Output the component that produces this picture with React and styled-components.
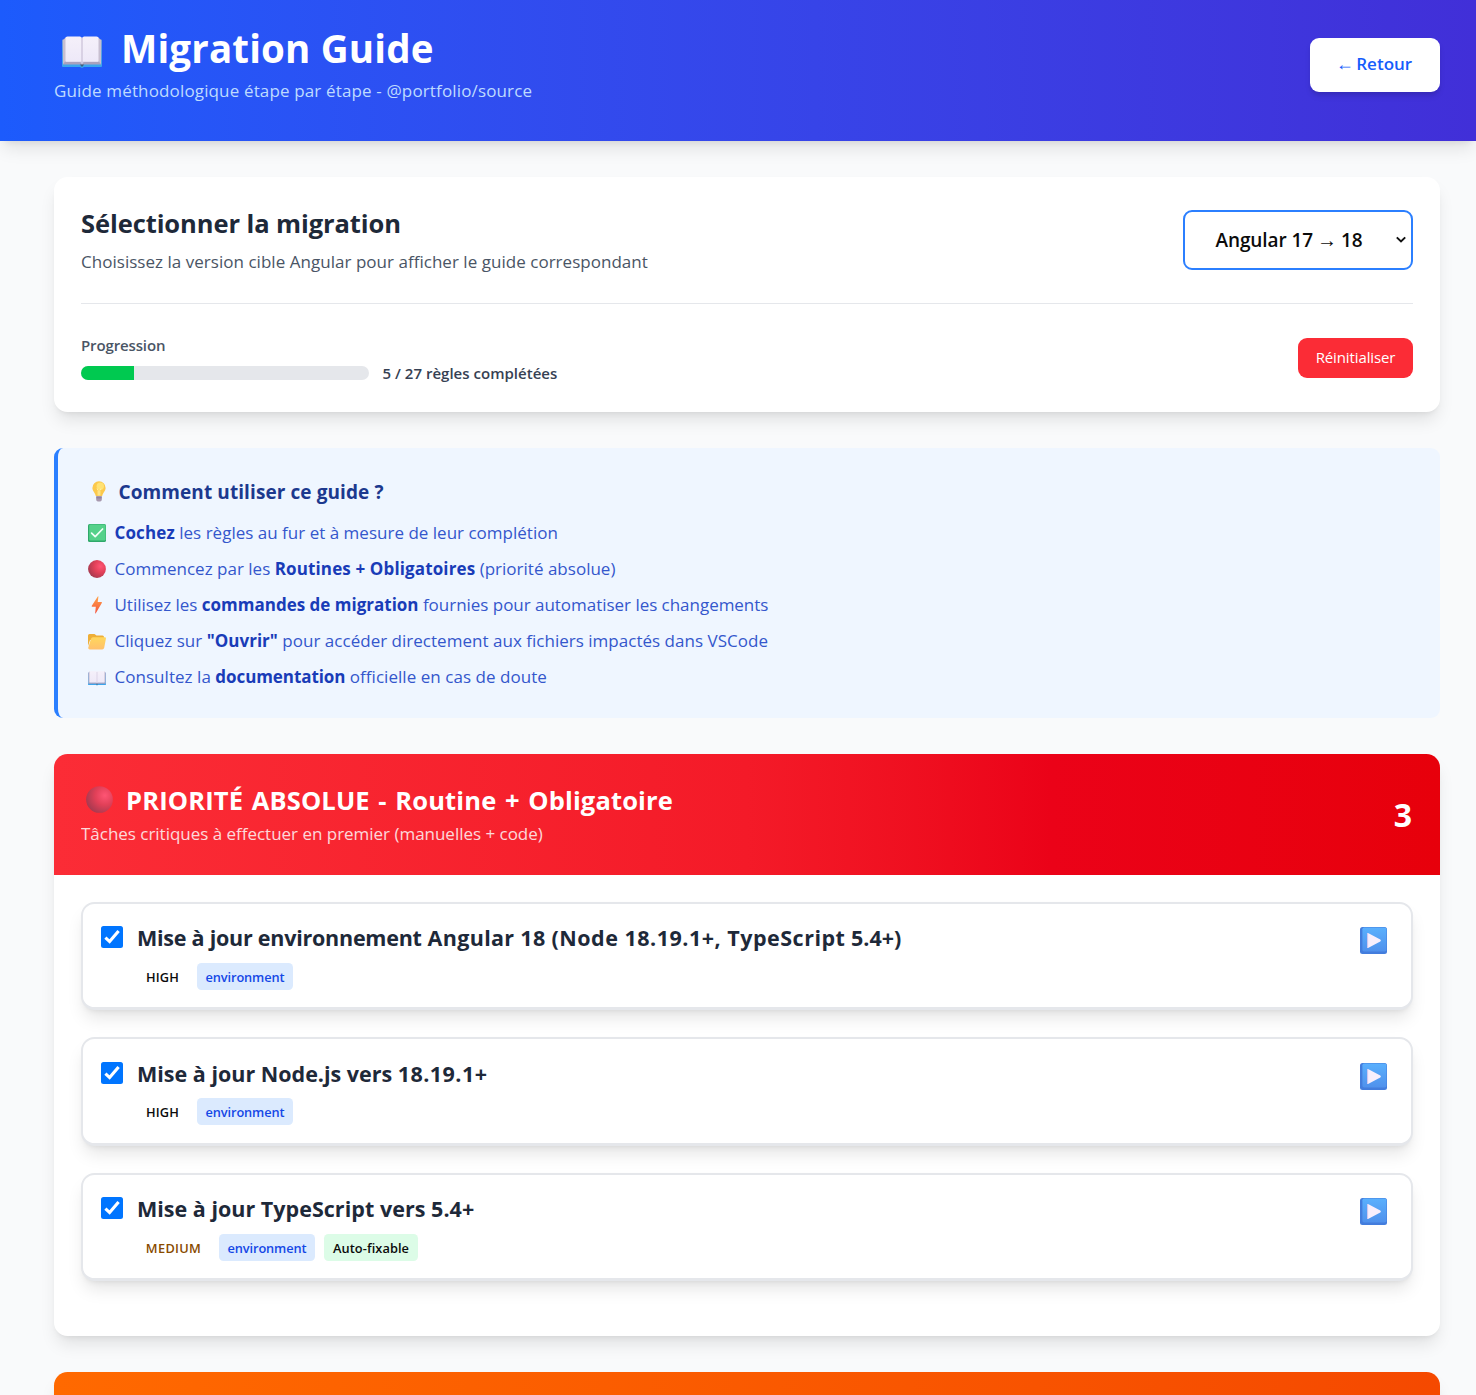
import React from "react";
import styled, { createGlobalStyle, css } from "styled-components";

const GlobalStyle = createGlobalStyle`
  *, *::before, *::after { box-sizing: border-box; }
  body { margin: 0; background: #f9fafb; }
  h1, h2, h3, p, ul { margin: 0; padding: 0; }
  button { font: inherit; }
`;

const shadow = css`
  box-shadow: 0 11.25px 16.875px -3.375px rgba(0, 0, 0, 0.1), 0 4.5px 6.75px -4.5px rgba(0, 0, 0, 0.1);
`;

const type = css`
  font-size: ${(p) => p.$size}px;
  letter-spacing: ${(p) => p.$ls || 0}px;
  white-space: nowrap;
`;

const Page = styled.div`
  height: 1395px;
  overflow: hidden;
  background: #f9fafb;
  font-family: "Open Sans", "Noto Sans", sans-serif;
  color: #1e2939;
`;

const Header = styled.header`
  height: 140.5px;
  padding: 26px 36px 0 54px;
  display: flex;
  justify-content: space-between;
  align-items: flex-start;
  background: linear-gradient(to right in oklab, #1c5bfc, #412fd8);
  ${shadow}
`;

const PageTitle = styled.h1`
  ${type}
  display: flex;
  align-items: center;
  height: 45px;
  line-height: 45px;
  font-weight: 700;
  color: #fff;
`;

const TitleIcon = styled.span`
  display: flex;
  margin: ${(p) => p.$margin};
`;

const Subtitle = styled.p`
  ${type}
  margin-top: 6px;
  line-height: 27px;
  color: #bedbff;
`;

const BackButton = styled.button`
  ${type}
  margin-top: 11.5px;
  width: 130px;
  height: 54px;
  padding: 0 0 2px;
  border: 0;
  border-radius: 9px;
  background: #fff;
  color: #155dfc;
  font-weight: 600;
  box-shadow: 0 4.5px 6.75px -1px rgba(0, 0, 0, 0.1), 0 2.25px 4.5px -2px rgba(0, 0, 0, 0.1);
`;

const ArrowGlyph = styled.span`
  display: inline-flex;
  justify-content: center;
  width: ${(p) => p.$w}px;
  margin: 0 ${(p) => p.$gap}px;
  font-family: "Liberation Sans", sans-serif;
  font-weight: 400;
  font-size: ${(p) => p.$glyph}px;
  line-height: 1;
  letter-spacing: 0;
`;

const Main = styled.main`
  padding: 36.5px 36px 0 54px;
  display: flex;
  flex-direction: column;
  gap: 36px;
`;

const Card = styled.section`
  height: 234.5px;
  padding: 27px;
  border-radius: 13.5px;
  background: #fff;
  ${shadow}
`;

const SelectRow = styled.div`
  display: flex;
  justify-content: space-between;
  height: 99.5px;
  border-bottom: 1px solid #e5e7eb;
`;

const CardTitle = styled.h2`
  ${type}
  margin-top: 0.5px;
  line-height: 36px;
  font-weight: 700;
`;

const Muted = styled.p`
  ${type}
  margin-top: 7px;
  line-height: 27px;
  color: #4a5565;
`;

const VersionSelect = styled.button`
  ${type}
  margin-top: 5.5px;
  width: 230px;
  height: 60px;
  padding: 1px 0 0 30.5px;
  border: 2px solid #2b7fff;
  border-radius: 9px;
  background: #fff;
  color: #0b0b0b;
  font-weight: 600;
  display: flex;
  align-items: center;
`;

const SelectChevron = styled.svg`
  margin-left: auto;
  margin-right: 4px;
`;

const ProgressRow = styled.div`
  display: flex;
  justify-content: space-between;
  padding-top: 30px;
`;

const ProgressLabel = styled.div`
  ${type}
  line-height: 22px;
  font-weight: 600;
  color: #4a5565;
`;

const ProgressLine = styled.div`
  display: flex;
  align-items: center;
  gap: 13.5px;
  margin-top: 6px;
  height: 22px;
`;

const Track = styled.div`
  width: 288px;
  height: 13.5px;
  margin-top: 1px;
  border-radius: 7px;
  background: #e5e7eb;
  overflow: hidden;
`;

const Fill = styled.div`
  height: 100%;
  background: #00c950;
`;

const ProgressCount = styled.span`
  ${type}
  font-weight: 600;
  color: #364153;
`;

const ResetButton = styled.button`
  ${type}
  margin-top: 4px;
  width: 115px;
  height: 40.5px;
  padding: 0 0 1px;
  border: 0;
  border-radius: 9px;
  background: #fb2c36;
  color: #fff;
`;

const Help = styled.section`
  height: 270px;
  padding: 28px 27px 0 30px;
  border-left: 4.5px solid #2b7fff;
  border-radius: 9px;
  background: #eff6ff;
`;

const HelpTitle = styled.h3`
  ${type}
  display: flex;
  align-items: center;
  height: 33px;
  font-weight: 700;
  color: #1c398e;
`;

const HelpList = styled.ul`
  list-style: none;
  padding-top: 6px;
`;

const HelpItem = styled.li`
  ${type}
  display: flex;
  align-items: center;
  height: 36px;
  color: #3457cc;
  b {
    font-weight: 700;
    color: #193cb8;
    letter-spacing: ${(p) => p.$bls || 0}px;
  }
`;

const ItemIcon = styled.span`
  display: flex;
  width: 18px;
  margin: ${(p) => p.$drop || 0}px 9px 0 -0.5px;
`;

const ItemText = styled.span`
  white-space: pre;
`;

const Priority = styled.section`
  flex: none;
  height: 582px;
  border-radius: 13.5px;
  background: #fff;
  ${shadow}
`;

const PriorityHeader = styled.div`
  display: flex;
  justify-content: space-between;
  align-items: center;
  height: 121px;
  padding: 0 27px;
  border-radius: 13.5px 13.5px 0 0;
  background: linear-gradient(to right in oklab, ${(p) => p.$stops});
  color: #fff;
`;

const PriorityTitle = styled.h2`
  ${type}
  display: flex;
  align-items: center;
  height: 36px;
  font-weight: 700;
  word-spacing: 1.8px;
`;

const PriorityNote = styled.p`
  ${type}
  line-height: 27px;
  margin-top: 2px;
  opacity: 0.82;
`;

const Count = styled.span`
  font-size: 32px;
  font-weight: 700;
  margin: 1px 1px 0 0;
`;

const Rules = styled.div`
  display: flex;
  flex-direction: column;
  gap: 27px;
  padding: 27px;
`;

const Rule = styled.article`
  display: flex;
  height: 108.5px;
  padding: 0 24px 0 18px;
  border: 2px solid #e5e7eb;
  border-bottom-width: 3px;
  border-radius: 13.5px;
  background: #fff;
  ${shadow}
`;

const Checkbox = styled.span`
  display: flex;
  flex: none;
  width: 22px;
  height: 22px;
  margin: 22.6px 14px 0 0;
  border-radius: 2.5px;
  background: #0075ff;
`;

const RuleBody = styled.div`
  flex: 1;
  padding-top: 18.5px;
`;

const RuleTitle = styled.h3`
  font-size: 21.5px;
  line-height: 32px;
  font-weight: 700;
  white-space: pre;
`;

const TitlePart = styled.span`
  letter-spacing: ${(p) => p.$ls}px;
`;

const Badges = styled.div`
  display: flex;
  gap: 9px;
  margin-top: 8.5px;
`;

const tones = {
  high: ["transparent", "#0b0b0b"],
  medium: ["transparent", "#894b00"],
  category: ["#dbeafe", "#1447e6"],
  auto: ["#dcfce7", "#0b0b0b"],
};

const Badge = styled.span`
  ${type}
  width: ${(p) => p.$w}px;
  height: 27px;
  line-height: 28px;
  text-align: center;
  border-radius: 4.5px;
  font-weight: 600;
  background: ${(p) => tones[p.$tone][0]};
  color: ${(p) => tones[p.$tone][1]};
`;

const PlaySlot = styled.span`
  display: flex;
  align-self: flex-start;
  margin-top: 23.8px;
`;

const Book = ({ w, id }) => (
  <svg width={w} height={w * 0.8} viewBox="0 0 40 32">
    <defs>
      <linearGradient id={id} x1="0" y1="0" x2="0" y2="1">
        <stop offset="0" stopColor="#7f9fd8" />
        <stop offset="1" stopColor="#36a5ee" />
      </linearGradient>
      <linearGradient id={id + "p"} x1="0" y1="0" x2="0" y2="1">
        <stop offset="0" stopColor="#f5f0fa" />
        <stop offset="0.88" stopColor="#eee9f8" />
        <stop offset="1" stopColor="#bdb2c9" />
      </linearGradient>
    </defs>
    <path d="M0 4.5Q0 3.5 1 3.5H39Q40 3.5 40 4.5V30Q40 31 39 31H22L20 32 18 31H1Q0 31 0 30Z" fill={`url(#${id})`} />
    <path d="M1 4L4.5 0.7V25L1 28.5Z" fill="#c8bfd0" />
    <path d="M39 4L35.5 0.7V25L39 28.5Z" fill="#c8bfd0" />
    <path d="M1 28.6L3.5 25H18L20 28 22 25H36.5L39 28.6H22L20 30 18 28.6Z" fill="#aaa1bd" />
    <path d="M3.5 2Q3.5 0.5 5.5 0.5H18Q20 0.8 20 2.5V28Q19.5 26 17.5 26H3.5Z" fill={`url(#${id}p)`} />
    <path d="M36.5 2Q36.5 0.5 34.5 0.5H22Q20 0.8 20 2.5V28Q20.5 26 22.5 26H36.5Z" fill={`url(#${id}p)`} />
    <path d="M20 2V28" stroke="#cfc6dc" strokeWidth="1.4" />
    <path d="M17.8 28.5H22.2L20 31Z" fill="#3a617e" />
  </svg>
);

const RedDot = ({ w, id }) => (
  <svg width={w} height={w} viewBox="0 0 20 20">
    <defs>
      <radialGradient id={id} cx="0.7" cy="0.35" r="0.72">
        <stop offset="0" stopColor="#ff5574" />
        <stop offset="0.5" stopColor="#e14058" />
        <stop offset="1" stopColor="#a93a50" />
      </radialGradient>
    </defs>
    <circle cx="10" cy="10" r="9.9" fill={`url(#${id})`} />
  </svg>
);

const Bulb = () => (
  <svg width="14" height="21" viewBox="0 0 14 21">
    <path d="M4.2 13.5H9.8V18.5Q9.8 20.5 7 20.5T4.2 18.5Z" fill="#a798ae" />
    <path d="M4.3 16.8H9.7" stroke="#8b7b96" />
    <path d="M7 .3A6.6 6.6 0 0 1 13.6 7C13.6 10.2 11 11.3 10.2 15H3.8C3 11.3.4 10.2.4 7A6.6 6.6 0 0 1 7 .3Z" fill="#fcc94c" />
    <circle cx="8.3" cy="5.2" r="3.7" fill="#ffe273" />
    <path d="M5 7.5L6.2 9.5V14.5M9 7.5L7.8 9.5V14.5" stroke="#fff0a0" strokeWidth="1" fill="none" />
  </svg>
);

const CheckMark = () => (
  <svg width="18" height="18" viewBox="0 0 18 18">
    <rect width="18" height="18" rx="1.6" fill="#2fa86a" />
    <rect x="1.2" y=".4" width="16.4" height="16.2" rx="1.3" fill="#55d18a" />
    <path d="M3.6 9.2L7.2 12.6 14.6 5" fill="none" stroke="#f3fff8" strokeWidth="1.7" strokeLinecap="round" strokeLinejoin="round" />
  </svg>
);

const Bolt = () => (
  <svg width="18" height="18" viewBox="0 0 18 18">
    <defs>
      <linearGradient id="bolt" x1="0" y1="0" x2="0" y2="1">
        <stop offset="0" stopColor="#ffa44a" />
        <stop offset="1" stopColor="#f4513c" />
      </linearGradient>
    </defs>
    <path d="M9.8.4Q10.4 0 10.4.8L9.7 6H13.5Q14.2 6.2 13.8 6.9L7.8 17.2Q7.2 17.9 7.2 17L7.8 10.7H4Q3.4 10.5 3.8 9.8Z" fill="url(#bolt)" />
  </svg>
);

const Folder = () => (
  <svg width="18" height="18" viewBox="0 0 18 18">
    <defs>
      <linearGradient id="folder" x1="0" y1="0" x2="0" y2="1">
        <stop offset="0" stopColor="#ffd75c" />
        <stop offset="1" stopColor="#ffc06c" />
      </linearGradient>
    </defs>
    <path d="M0 3.5Q0 2 1.5 2H6.5L8.5 3.4H14.5Q16 3.4 16 5V8H2L0 14Z" fill="#eeae37" />
    <path d="M3 6.7Q3.4 5.2 4.8 5.2H17Q18.2 5.3 17.9 6.7L16.2 15.8Q15.8 17.4 14.2 17.4H1.8Q0 17.2.3 15.4Z" fill="url(#folder)" />
  </svg>
);

const Play = ({ id }) => (
  <svg width="27" height="27" viewBox="0 0 27 27">
    <defs>
      <linearGradient id={id} x1="0" y1="0" x2="0" y2="1">
        <stop offset="0" stopColor="#5ab0fd" />
        <stop offset="1" stopColor="#5091ec" />
      </linearGradient>
    </defs>
    <rect width="27" height="27" rx="2.5" fill="#437ddd" />
    <rect x="2.4" y=".5" width="24.1" height="24" rx="1.8" fill={`url(#${id})`} />
    <path d="M7 7Q7 5.5 8.5 6.2L20.3 12.6Q21.5 13.5 20.3 14.4L8.5 20.8Q7 21.5 7 20Z" fill="#f8effc" />
    <path d="M7.6 6.2V20.8" stroke="#c8c2ee" strokeWidth="1" />
  </svg>
);

const Tick = () => (
  <svg width="22" height="22" viewBox="0 0 22 22">
    <path d="M4.4 11.6L8.6 15.6 17.6 5" fill="none" stroke="#fff" strokeWidth="3.1" />
  </svg>
);

const helpItems = [
  { icon: <CheckMark />, ls: 0.01, bls: 0.12, drop: 1, text: <><b>Cochez</b> les règles au fur et à mesure de leur complétion</> },
  { icon: <RedDot w={18} id="dotSmall" />, ls: 0.01, bls: 0.13, drop: 1, text: <>Commencez par les <b>Routines + Obligatoires</b> (priorité absolue)</> },
  { icon: <Bolt />, ls: -0.03, bls: 0, drop: 1, text: <>Utilisez les <b>commandes de migration</b> fournies pour automatiser les changements</> },
  { icon: <Folder />, ls: 0.02, bls: 0.02, drop: 1, text: <>Cliquez sur <b>"Ouvrir"</b> pour accéder directement aux fichiers impactés dans VSCode</> },
  { icon: <Book w={18} id="bookSmall" />, ls: 0.04, bls: -0.08, drop: 4, text: <>Consultez la <b>documentation</b> officielle en cas de doute</> },
];

const rules = [
  {
    parts: [
      ["Mise à jour environnement", -0.24],
      [" Angular 18 ", 0.33],
      ["(Node 18.19.1+, ", 0.5],
      ["TypeScript", 0.5],
      [" 5.4+)", 0],
    ],
    badges: [["HIGH", "high", 51, 0.2], ["environment", "category", 96, -0.12]],
  },
  {
    parts: [["Mise à jour Node.js vers ", 0], ["18.19.1+", 0.45]],
    badges: [["HIGH", "high", 51, 0.2], ["environment", "category", 96, -0.12]],
  },
  {
    parts: [["Mise à jour ", 0], ["TypeScript vers 5.4+", 0.04]],
    badges: [["MEDIUM", "medium", 73, 0.3], ["environment", "category", 96, -0.12], ["Auto-fixable", "auto", 94, 0.08]],
  },
];

const done = 5;
const total = 27;

export default function App() {
  return (
    <Page>
      <GlobalStyle />
      <Header>
        <div>
          <PageTitle $size={38.5} $ls={0.16}>
            <TitleIcon $margin="6px 19px 0 8px"><Book w={40} id="bookLarge" /></TitleIcon>
            Migration Guide
          </PageTitle>
          <Subtitle $size={17} $ls={0.145}>Guide méthodologique étape par étape - @portfolio/source</Subtitle>
        </div>
        <BackButton $size={17}>
          <ArrowGlyph $w={14} $glyph={18} $gap={0}>←</ArrowGlyph>{" "}Retour
        </BackButton>
      </Header>
      <Main>
        <Card>
          <SelectRow>
            <div>
              <CardTitle $size={25.5} $ls={-0.08}>Sélectionner la migration</CardTitle>
              <Muted $size={17} $ls={0.03}>Choisissez la version cible Angular pour afficher le guide correspondant</Muted>
            </div>
            <VersionSelect $size={19} $ls={-0.1}>
              Angular 17<ArrowGlyph $w={16} $glyph={20} $gap={6}>→</ArrowGlyph>18
              <SelectChevron width="12" height="8" viewBox="0 0 12 8">
                <path d="M1.8 1.4L6 5.4 10.2 1.4" fill="none" stroke="#111" strokeWidth="2" />
              </SelectChevron>
            </VersionSelect>
          </SelectRow>
          <ProgressRow>
            <div>
              <ProgressLabel $size={15} $ls={-0.13}>Progression</ProgressLabel>
              <ProgressLine>
                <Track>
                  <Fill style={{ width: `${(done / total) * 100}%` }} />
                </Track>
                <ProgressCount $size={15} $ls={0.02}>{`${done} / ${total} règles complétées`}</ProgressCount>
              </ProgressLine>
            </div>
            <ResetButton $size={15} $ls={-0.12}>Réinitialiser</ResetButton>
          </ProgressRow>
        </Card>

        <Help>
          <HelpTitle $size={19} $ls={0.09}>
            <TitleIcon $margin="-1px 13px 0 3.5px"><Bulb /></TitleIcon>
            Comment utiliser ce guide ?
          </HelpTitle>
          <HelpList>
            {helpItems.map((item, i) => (
              <HelpItem key={i} $size={17} $ls={item.ls} $bls={item.bls}>
                <ItemIcon $drop={item.drop}>{item.icon}</ItemIcon>
                <ItemText>{item.text}</ItemText>
              </HelpItem>
            ))}
          </HelpList>
        </Help>

        <Priority>
          <PriorityHeader $stops="#fb2c36, #f41a28 50%, #eb0218 72%, #e7000b">
            <div>
              <PriorityTitle $size={25.5} $ls={0.15}>
                <TitleIcon $margin="0 13px 0 5px"><RedDot w={27} id="dotLarge" /></TitleIcon>
                PRIORITÉ ABSOLUE - Routine + Obligatoire
              </PriorityTitle>
              <PriorityNote $size={17} $ls={-0.02}>Tâches critiques à effectuer en premier (manuelles + code)</PriorityNote>
            </div>
            <Count>3</Count>
          </PriorityHeader>
          <Rules>
            {rules.map((rule, i) => (
              <Rule key={i}>
                <Checkbox><Tick /></Checkbox>
                <RuleBody>
                  <RuleTitle>
                    {rule.parts.map(([text, ls]) => (
                      <TitlePart key={text} $ls={ls}>{text}</TitlePart>
                    ))}
                  </RuleTitle>
                  <Badges>
                    {rule.badges.map(([label, tone, w, ls]) => (
                      <Badge key={label} $size={12.8} $tone={tone} $w={w} $ls={ls}>{label}</Badge>
                    ))}
                  </Badges>
                </RuleBody>
                <PlaySlot><Play id={`play${i}`} /></PlaySlot>
              </Rule>
            ))}
          </Rules>
        </Priority>

        <Priority>
          <PriorityHeader $stops="#ff6900, #f54900" />
        </Priority>
      </Main>
    </Page>
  );
}
